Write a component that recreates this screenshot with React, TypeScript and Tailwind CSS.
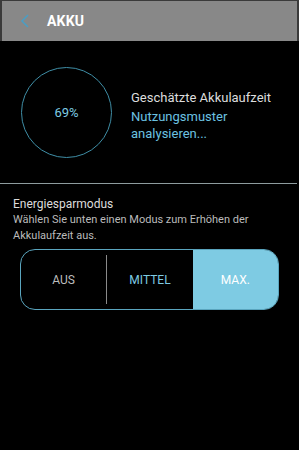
export default function App() {
  return (
    <div
      className="w-[299px] h-[450px] bg-black overflow-hidden"
      style={{ fontFamily: "Roboto, 'Noto Sans', sans-serif" }}
    >
      <div className="h-[41px] bg-[#888888] border-t border-l-2 border-r-2 border-[#3a3a3a] flex items-center">
        <svg width="10" height="14" viewBox="0 0 10 14" className="ml-[18px]">
          <path d="M8 1 L2 7 L8 13" fill="none" stroke="#4a9ec4" strokeWidth="1.6" />
        </svg>
        <span className="ml-[17px] text-white font-bold text-[14px] tracking-[0.2px]">AKKU</span>
      </div>

      <div className="flex items-center h-[142px]">
        <div className="ml-[21px] w-[91px] h-[91px] rounded-full border border-[#3f8ea6] flex items-center justify-center mt-[1px]">
          <span className="text-[#7ecbe3] text-[13px]">69%</span>
        </div>
        <div className="ml-[19px] mt-[6px] text-[13px] leading-[17px]">
          <div className="text-[#dddddd] mb-[2px]">Geschätzte Akkulaufzeit</div>
          <div className="text-[#6cc2e0]">Nutzungsmuster</div>
          <div className="text-[#6cc2e0]">analysieren...</div>
        </div>
      </div>

      <div className="h-px bg-[#8e9c9e] mr-[2px]" />

      <div className="px-[13px] pt-[12px]">
        <div className="text-[#dddddd] text-[12px] leading-[16px]">Energiesparmodus</div>
        <div className="text-[#bbbbbb] text-[11px] leading-[16px]">
          Wählen Sie unten einen Modus zum Erhöhen der Akkulaufzeit aus.
        </div>
      </div>

      <div className="mx-[20px] mt-[5px] h-[61px] rounded-[15px] border border-[#5aa5be] flex overflow-hidden">
        <div className="flex-1 flex items-center justify-center py-[5px]">
          <span className="text-[#bdbdbd] text-[12px]">AUS</span>
        </div>
        <div className="w-px bg-[#8a8a8a] my-[5px]" />
        <div className="flex-1 flex items-center justify-center">
          <span className="text-[#7ecbe3] text-[12px]">MITTEL</span>
        </div>
        <div className="flex-1 flex items-center justify-center bg-[#7ecbe3]">
          <span className="text-white text-[12px]">MAX.</span>
        </div>
      </div>
    </div>
  );
}
